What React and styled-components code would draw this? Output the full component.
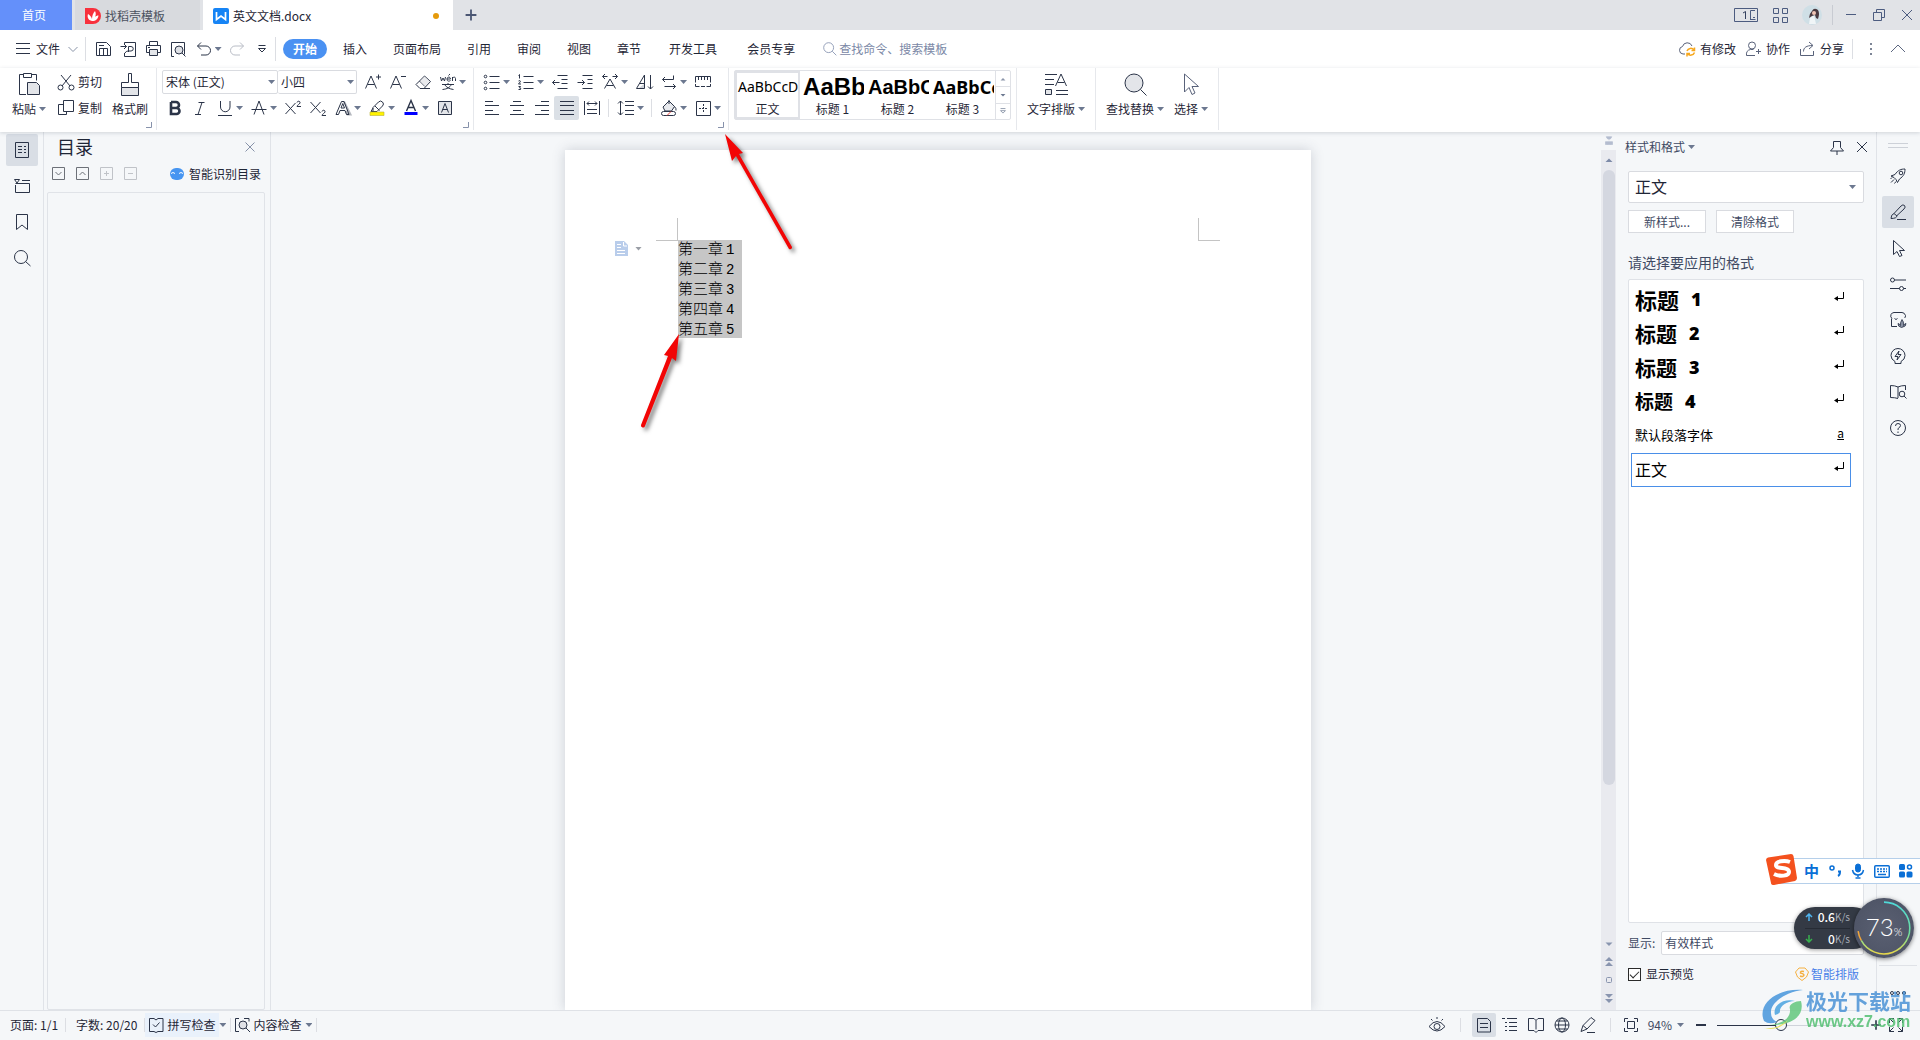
import React, { useState } from "react";
import styled, { createGlobalStyle, css } from "styled-components";

const INK = "#2b3448";

const GlobalStyle = createGlobalStyle`
  * {
    box-sizing: border-box;
  }
  html,
  body,
  #root {
    height: 100%;
    margin: 0;
  }
  body {
    overflow: hidden;
    background: #f5f7f9;
    color: #1f2636;
    font-family: "Noto Sans CJK SC", "Noto Sans", sans-serif;
    font-size: 12px;
    line-height: 18px;
  }
  button,
  input,
  select {
    margin: 0;
    padding: 0;
    border: 0;
    background: none;
    color: inherit;
    font: inherit;
  }
`;

/* every icon is drawn on a 20 x 20 grid */
const icons = {
  menu: <path d="M3 4.500h14M3 9.500h14M3 14.500h14" />,
  chevronDown: <path d="M5.500 8l4.500 4.500L14.500 8" />,
  chevronUp: <path d="M3 13l7-7 7 7" />,
  save: (
    <path d="M3.500 16.500v-13h10l4 4v9zM6.500 16.500v-7h8v7M10.500 9.500v7M6 6.500h5" />
  ),
  exportPdf: (
    <path d="M6.500 5V3.500h11v14h-11V14M2.500 7.500h6M6 5l2.500 2.500L6 10M10.500 13V7.500h2.500a2 2 0 0 1 0 4.500h-3q-2 0-3 2" />
  ),
  print: (
    <>
      <path d="M6.500 6.500v-4h8v4M6 13.500H3.500v-7h14v7H15" />
      <path d="M6.500 10.500h8v6h-8z" fill="#e3e5e9" />
      <path d="M5 8.500h2" />
    </>
  ),
  preview: (
    <>
      <path d="M6 17.500H3.500v-14h13v12" />
      <circle cx="11" cy="11" r="4" fill="#dfe1e6" />
      <path d="M14 14l3.500 3.500" />
    </>
  ),
  undo: <path d="M7 3.500L3.500 7 7 10.500M3.500 7h8.500a4.500 4.500 0 0 1 0 9H7" />,
  redo: <path d="M13 3.500L16.500 7 13 10.500M16.500 7H8a4.500 4.500 0 0 0 0 9h5" />,
  more: <path d="M6.500 6.500h7M6.500 9.500l3.500 3.500 3.500-3.500z" />,
  search: (
    <>
      <circle cx="8.500" cy="8.500" r="5.500" />
      <path d="M12.500 12.500l4.500 4.500" />
    </>
  ),
  cloud: (
    <>
      <path d="M8 15H6a3.800 3.800 0 0 1-.5-7.500 5 5 0 0 1 9.500-.5" />
      <g stroke="#f7a71c" strokeWidth="1.500">
        <path d="M10 12a4 4 0 0 1 7-1M17.500 8.500v3h-3M17.500 13.500a4 4 0 0 1-7 1M10 17.500v-3h3" />
      </g>
    </>
  ),
  collab: (
    <>
      <circle cx="9" cy="6.500" r="3.500" />
      <path d="M12 16.500H3.500c-.5-3.500 1-5.500 4-6h3M13 12.500h5M15.500 10v5" />
    </>
  ),
  share: <path d="M3.500 10v6.500h13V12M6.500 12.500c0-4 3-6 9-6M12 3l4 3.500-4 3.500" />,
  dots: (
    <path d="M9 4h2v2H9zM9 9h2v2H9zM9 14h2v2H9z" fill="currentColor" stroke="none" />
  ),
  plus: <path d="M4 10h12M10 4v12" strokeWidth="2" />,
  minus: <path d="M5 10h10" strokeWidth="2" />,
  winMin: <path d="M5 9.500h10" />,
  winRestore: <path d="M4.500 7.500h8v8h-8zM7.500 7V4.500h8v8H13" />,
  close: <path d="M5 5l10 10M15 5L5 15" />,
  grid: <path d="M3.500 3.500h5v5h-5zM12.500 3.500h5v5h-5zM3.500 12.500h5v5h-5zM12.500 12.500h5v5h-5z" />,
  cut: (
    <>
      <path d="M5 3l9 11M15 3L6 14" />
      <circle cx="4.500" cy="15.500" r="2.500" />
      <circle cx="15.500" cy="15.500" r="2.500" />
    </>
  ),
  copy: <path d="M7.500 2.500h10v11h-10zM7.500 6.500h-5v10h8v-3" />,
  fontUp: <path d="M2.500 16.500L8 4l5.500 12.500M4.500 12.500h7M13 5h5M15.500 2.500v5" />,
  fontDown: <path d="M2.500 16.500L8 4l5.500 12.500M4.500 12.500h7M13 4.500h5" />,
  eraser: (
    <>
      <path d="M11.500 4l6 5.500-6.500 7H7L3 12.500z" />
      <path d="M6.500 9l5.500 5.500" />
      <path d="M7 9.500l4.500-5 5.500 5-5 5z" fill="#dfe1e6" stroke="none" opacity="0.7" />
      <path d="M7 16.500h10" />
    </>
  ),
  pinyin: (
    <>
      <path d="M2.500 5l1 4 1.500-3 1.500 3 1-4M9 7h3.500c0-2.500-3.500-2.500-3.500 0s2 2.500 3.500 1.500M14.500 9V5M14.500 6.500c1-2 3-1.500 3 0V9M10.500 3.500l1.500-1.500" />
      <path d="M4 12.500h12M10 11v1.500M6.500 12.500c2 3 5 4.500 9 5M13.500 12.500c-2 3-4 4.500-9 5" />
    </>
  ),
  bold: (
    <path d="M6 4v12h5.500a3 3 0 0 0 0-6H6M6 4h5a2.800 2.800 0 0 1 0 6" strokeWidth="2.600" />
  ),
  italic: <path d="M8.500 4.500h6M5 16.500h6M12 4.500l-4 12" />,
  underline: <path d="M5.500 3v6a4.500 4.500 0 0 0 9.500 0V3M3 17.500h14" />,
  strike: <path d="M5 16.500L10 3l5 13.500M2.500 11.500h15" />,
  sup: <path d="M2.500 5l10 11M12.500 5l-10 11M14 4.500c.5-2 3.500-1.500 3 .5-.5 1.500-3 2-3 3.500h4" />,
  sub: <path d="M2.500 4l10 11M12.500 4l-10 11M14 13.500c.5-2 3.500-1.500 3 .5-.5 1.500-3 2-3 3.500h4" />,
  textEffect: (
    <>
      <path d="M11 3.500l6.500 13h-3l-1.500-3.500" opacity="0.35" strokeWidth="2" />
      <path d="M3 16.500L8.500 3.500h2.500l5 13h-2.500l-1.500-4H7l-1.500 4zM8 10h3.500L9.800 5.500z" />
    </>
  ),
  highlighter: (
    <>
      <path d="M6 9.500l5.500-5.500q2-2 4 0t0 4L10 13.500H6z" />
      <path d="M8 8l4.500 4.500M6 10l-2 3.500h4" />
      <path d="M3 14h14v3.500H3z" fill="#fff200" stroke="#b8b23a" strokeWidth="0.600" />
    </>
  ),
  fontColor: (
    <>
      <path d="M5.500 13L10 2.500 14.500 13M7 9.500h6" strokeWidth="1.400" />
      <path d="M3.500 14h13v3h-13z" fill="#0000ff" stroke="none" />
    </>
  ),
  charShade: (
    <>
      <path d="M3.500 3.500h13v13h-13z" fill="#e3e5e9" />
      <path d="M6.500 14.500L10 5.500l3.500 9M7.500 11.500h5" />
    </>
  ),
  bullets: (
    <>
      <path d="M7.500 4.500h10M7.500 10.500h10M7.500 16.500h10" />
      <circle cx="3.500" cy="4.500" r="1.300" />
      <circle cx="3.500" cy="10.500" r="1.300" />
      <circle cx="3.500" cy="16.500" r="1.300" />
    </>
  ),
  numbering: (
    <path d="M7.500 4.500h10M7.500 10.500h10M7.500 16.500h10M2.500 3.500l1-1v4M2.500 9q2-1 2 .5l-2 2.500H5M2.500 14.500h2l-1 1.500q2 0 1 1.500H2.500" />
  ),
  indentLess: (
    <path d="M7.500 3.500h10M11.500 7.500h6M11.500 11.500h6M7.500 16.500h10M2.500 10.500h7M5 8l-2.500 2.500L5 13" />
  ),
  indentMore: (
    <path d="M7.500 3.500h10M12.500 7.500h5M12.500 11.500h5M7.500 16.500h10M2.500 10.500h7M7 8l2.500 2.500L7 13" />
  ),
  charScale: (
    <path d="M4.500 16.500L10 7l5.500 9.500M6.500 13.500h7M2.500 4.500h5M5 2L2.500 4.500 5 7M12.500 4.500h5M15 2l2.500 2.500L15 7" />
  ),
  sort: (
    <>
      <path d="M2.500 16.500L10.500 3v13.500zM6 11.500h4.500M16.500 3v14M14 14.500l2.500 2.500 2.500-2.500" />
      <path d="M5 16l5-4v4z" fill="#cfd3da" stroke="none" />
    </>
  ),
  wrap: <path d="M14.500 3.500v4h-11M6 5L3.500 7.500 6 10M5.500 14.500h11M14 12l2.500 2.500L14 17" />,
  tabs: (
    <path d="M2.500 10.500v-6h15v6M5.500 5v3M8.500 5v3M11.500 5v3M14.500 5v3M2.500 14.500h4M13.500 14.500h4M8 14.500h4M2.500 12v2.500M17.500 12v2.500" />
  ),
  alignLeft: <path d="M3 3.500h8M3 7.500h14M3 12.500h8M3 16.500h14" />,
  alignCenter: <path d="M6 3.500h8M3 7.500h14M6 12.500h8M3 16.500h14" />,
  alignRight: <path d="M9 3.500h8M3 7.500h14M9 12.500h8M3 16.500h14" />,
  justify: <path d="M3 3.500h14M3 7.500h14M3 12.500h14M3 16.500h14" />,
  distribute: (
    <path d="M2.500 3v14M17.500 3v14M5 5.500h10M7 3.500L5 5.500l2 2M13 3.500l2 2-2 2M5 11.500h10M5 15.500h10" />
  ),
  lineSpacing: (
    <path d="M9 3.500h9M9 7.500h9M9 12.500h9M9 16.500h9M4.500 3v14M2 5.500L4.500 3 7 5.500M2 14.500L4.500 17 7 14.500" />
  ),
  fill: (
    <>
      <path d="M4 9l6-6 5.500 5.500-3 4.500H6z" fill="#e8eaee" />
      <path d="M10 6V2M15.500 8.500q2 2 1.500 4" />
      <rect x="2.500" y="13.500" width="14" height="4" rx="2" fill="#fff" />
      <path d="M8 17.500l4-4" stroke="#e8453c" />
    </>
  ),
  borders: (
    <>
      <path d="M3.500 3.500h14v14h-14z" />
      <path d="M6 10.500h9M10.500 6v9" strokeDasharray="2 1" />
    </>
  ),
  toc: (
    <path d="M3.500 2.500h13v15h-13zM6 6.500h4M6 9.500h4M6 12.500h4M12 6.500h2M12 9.500h2M12 12.500h2" />
  ),
  folder: <path d="M10 4.500h8M3.500 9v7.500h14v-9h-14M2.500 3.500h5L5 7z" />,
  bookmark: <path d="M4.500 2.500h11v15L10 13l-5.500 4.500z" />,
  find: (
    <>
      <circle cx="9" cy="9" r="6.500" />
      <path d="M13.500 13.500l5 4.500" />
    </>
  ),
  boxDown: <path d="M3.500 3.500h12v12h-12zM6.500 8l3 3 3-3" />,
  boxUp: <path d="M3.500 3.500h12v12h-12zM6.500 11l3-3 3 3" />,
  boxPlus: <path d="M3.500 3.500h12v12h-12zM7 9.500h5M9.500 7v5" />,
  boxMinus: <path d="M3.500 3.500h12v12h-12zM7 9.500h5" />,
  pin: <path d="M6.500 4.500h7v6l3 3.500h-13l3-3.500zM10 14v4" />,
  rocket: (
    <>
      <path d="M7 8.500C10 4 13 3 17 3c0 4-1 7-5.500 10l-2 3.500-1.500-3L6 11.500 3 10z" />
      <circle cx="13" cy="7" r="1.800" />
      <path d="M6 13.500l-3 3M4 11.500l-1.500 1.500M8 15.500L6.500 17.500" />
    </>
  ),
  brushPen: (
    <path d="M3 16.500q0-4 3-5l7-7.500q2-2 3.500-.500t-.500 3.500L9 13.500q0 3-6 3zM6 11.500l3 2.500M9 17.500h9" />
  ),
  pointer: <path d="M5.500 2.500v14l3.500-3 2.500 5 2.500-1-2.500-5h5z" />,
  sliders: (
    <>
      <circle cx="4.500" cy="6" r="2" />
      <circle cx="13.500" cy="14.500" r="2" />
      <path d="M6.500 6H18M2 14.500h9.500M15.500 14.500H18" />
    </>
  ),
  assets: (
    <>
      <path d="M4 8.500Q2 7 3 4.500 4 2.500 6 2.500h8q2.500 0 3.500 3 0 2-1 2.500M3.500 8.500v8H9M6.500 8.500q1.500 2 3 0" />
      <path
        d="M13.500 17.500q-4-1-3.500-4 1.500 0 2.500 2-.5-3 1.500-6 2 2 1.500 6 1-2 2.500-2 .500 3-4.500 4z"
        fill="#8b93a5"
        strokeWidth="0.800"
      />
    </>
  ),
  bulb: (
    <path d="M7 15.500Q3 13.500 3 9.500a7 7 0 0 1 14 0q0 4-4 6v2H7zM11 5l-4 5.500h3L9 14l4-5.500h-3z" />
  ),
  book: (
    <path d="M10 5v11M10 5q-3-1.500-7.500-1.500v12q4.500 0 7.500 1M10 5q3-1.500 7.500-1.500V8" />
  ),
  bookOpen: <path d="M2.500 3.500h5.500l2 2 2-2h5.500v12h-5.500l-2 2-2-2H2.500zM10 5.500v9" />,
  lens: (
    <>
      <circle cx="14" cy="12" r="2.800" />
      <path d="M16 14l2.500 2.500" />
    </>
  ),
  help: (
    <>
      <circle cx="10" cy="10" r="7.500" />
      <path d="M7.500 8q0-2.500 2.500-2.500t2.500 2q0 1.500-2 2.500-.5.500-.5 2M10 13.500v1.500" />
    </>
  ),
  spell: (
    <path d="M8 3.500H3.500v13h4.500l2 1 2-1h5v-13h-5l-2 1.500zM7 9.500l2.500 2.500 4-4.500" />
  ),
  inspect: (
    <>
      <path d="M7 3.500H3.500v13H7M12 3.500h5v3" />
      <circle cx="11" cy="10" r="4" fill="#dfe1e6" />
      <path d="M14 13l4 4" />
    </>
  ),
  eye: (
    <>
      <path d="M2 11.500q8-10 16 0-8 9-16 0zM10 2v2M4 4l1.500 1.500M16 4l-1.500 1.500" />
      <circle cx="10" cy="11.500" r="3" />
    </>
  ),
  pageView: <path d="M3.500 3.500h10l3 3v10.500h-13zM6 8.500h8M6 12.500h8" />,
  outline: (
    <path d="M2 3.500h3M7 3.500h10M5 7.500h2M9 7.500h8M5 11.500h2M9 11.500h8M5 15.500h2M9 15.500h8" />
  ),
  globe: (
    <>
      <circle cx="10" cy="10" r="7" />
      <ellipse cx="10" cy="10" rx="3.500" ry="7" />
      <path d="M3 10h14M4.500 6h11M4.500 14h11" />
    </>
  ),
  pen: <path d="M3 16.500l2-6 8-8 4 3-8 8.500zM5 10.500l4 3.500M9 17.500h8" />,
  fit: (
    <path d="M3.500 7V3.500H7M13 3.500h3.500V7M16.500 13v3.500H13M7 16.500H3.500V13M6.500 6.500h7v7h-7z" />
  ),
  full: (
    <path d="M3.500 8V3.500H8M12 3.500h4.500V8M16.500 12v4.500H12M8 16.500H3.500V12M3.500 3.500l4 4M16.500 3.500l-4 4M16.500 16.500l-4-4M3.500 16.500l4-4" />
  ),
  enter: (
    <>
      <path d="M15.500 5v6.500H8" />
      <path d="M6 11.500l4-2.500v5z" fill="currentColor" stroke="none" />
    </>
  ),
  ruler: (
    <path
      d="M6 4h8l-2 3h-4zM10 7v2M5 15v-4h10v4zM8 15v-2M12 15v-2"
      fill="#b4bdd0"
    />
  ),
  doubleUp: (
    <path d="M6 9l4-4 4 4zM6 14l4-4 4 4z" fill="currentColor" stroke="none" />
  ),
  doubleDown: (
    <path d="M6 6h8l-4 4zM6 11h8l-4 4z" fill="currentColor" stroke="none" />
  ),
  triUp: <path d="M6.500 12L10 8.500l3.500 3.500z" fill="currentColor" stroke="none" />,
  triDown: <path d="M6.500 8.500h7L10 12z" fill="currentColor" stroke="none" />,
  locate: <rect x="7.500" y="7.500" width="5" height="5" rx="1" />,
};

const Icon = ({ name, size = 20, color }) => (
  <Svg
    width={size}
    height={size}
    viewBox="0 0 20 20"
    fill="none"
    stroke="currentColor"
    $color={color}
    aria-hidden="true"
  >
    {icons[name]}
  </Svg>
);

const ToolButton = ({ icon, label, caret, active, color }) => (
  <Tool type="button" title={label} $caret={caret} $active={active}>
    <Icon name={icon} color={color} />
    {caret && <Caret />}
  </Tool>
);

const SelectBox = ({ label, options, ...box }) => (
  <SelectWrap {...box}>
    <select aria-label={label}>
      {options.map((o) => (
        <option key={o}>{o}</option>
      ))}
    </select>
    <Caret />
  </SelectWrap>
);

const TitleBar = () => (
  <TitleRow>
    <HomeTab type="button">首页</HomeTab>
    <DocTab type="button">
      <svg width="16" height="16" viewBox="0 0 16 16">
        <path d="M0 0h8a8 8 0 0 1 0 16H0z" fill="#f8313d" />
        <path
          d="M7 13C3 12 2 9 3 6c2 1 3.500 3 4 5 0-3 1-6 3-8 1 2 1 4 0 6 1-1 2-1.500 3.500-1.500C13 11 11 13 7 13z"
          fill="#fff"
        />
      </svg>
      找稻壳模板
    </DocTab>
    <DocTab type="button" $current>
      <svg width="16" height="16" viewBox="0 0 16 16">
        <rect width="16" height="16" rx="2" fill="#1684f5" />
        <path d="M3.500 4v7.500L8 8l4.500 3.500V4" fill="none" stroke="#fff" strokeWidth="1.700" />
      </svg>
      英文文档.docx
      <Unsaved />
    </DocTab>
    <NewTab type="button" aria-label="新建">
      <Icon name="plus" size={18} color="#4a5673" />
    </NewTab>
    <WindowTools>
      <AccountTools>
        <svg width="24" height="14" viewBox="0 0 24 14" fill="none" stroke="#4c5c80">
          <path d="M.5.500h23v13H.5zM21 2.500h-4.500v9.500M16.500 11.500h5M19 9.500h2" />
          <path d="M9 5l2.500-1.500V11" stroke="#33405e" />
        </svg>
        <Icon name="grid" color="#4c5c80" />
        <svg width="20" height="20" viewBox="0 0 20 20">
          <circle cx="10" cy="10" r="10" fill="#cfdfe6" />
          <path d="M7 19l1-6 4-3 2 9z" fill="#f0f5f7" />
          <path d="M10 6q2-4 6-1 2 3 0 9l-2-1-1-3-3 1-3 2q0-4 3-7z" fill="#4a3a40" />
          <circle cx="12" cy="8" r="2" fill="#f0c4b4" />
        </svg>
      </AccountTools>
      <TitleDivider />
      <Icon name="winMin" color="#4c5c80" />
      <Icon name="winRestore" color="#4c5c80" />
      <Icon name="close" color="#4c5c80" />
    </WindowTools>
  </TitleRow>
);

const menus = ["插入", "页面布局", "引用", "审阅", "视图", "章节", "开发工具", "会员专享"];

const MenuBar = () => (
  <MenuRow>
    <FileButton type="button">
      <Icon name="menu" />
      文件
      <Icon name="chevronDown" color="#8a94a8" />
    </FileButton>
    <Divider $h={24} />
    <QuickTools>
      <ToolButton icon="save" label="保存" />
      <ToolButton icon="exportPdf" label="输出为PDF" />
      <ToolButton icon="print" label="打印" />
      <ToolButton icon="preview" label="打印预览" />
      <ToolButton icon="undo" label="撤消" caret />
      <ToolButton icon="redo" label="恢复" color="#b9bdc6" />
      <ToolButton icon="more" label="自定义快速访问工具栏" />
    </QuickTools>
    <Divider $h={24} />
    <MenuTab type="button" $current>
      开始
    </MenuTab>
    {menus.map((m, i) => (
      <MenuTab key={m} type="button" $wide={i > 5}>
        {m}
      </MenuTab>
    ))}
    <CommandSearch>
      <Icon name="search" size={18} color="#8b97b3" />
      <input aria-label="查找命令" placeholder="查找命令、搜索模板" />
    </CommandSearch>
    <MenuRight>
      <button type="button">
        <Icon name="cloud" color="#59627a" />
        有修改
      </button>
      <button type="button">
        <Icon name="collab" color="#59627a" />
        协作
      </button>
      <button type="button">
        <Icon name="share" color="#59627a" />
        分享
      </button>
      <Divider $h={20} $gap={1} />
      <Icon name="dots" color="#7d8596" />
      <Icon name="chevronUp" color="#5c6780" />
    </MenuRight>
  </MenuRow>
);

const samples = [
  { name: "正文", text: "AaBbCcD", size: 14 },
  { name: "标题 1", text: "AaBb", size: 24, bold: true },
  { name: "标题 2", text: "AaBbC", size: 20, bold: true },
  { name: "标题 3", text: "AaBbCc", size: 18, bold: true },
];

const Launcher = () => (
  <Launch type="button" aria-label="更多选项">
    <svg width="6" height="6" viewBox="0 0 6 6" fill="none" stroke="#8792ab">
      <path d="M5.500 0v5.500H0" />
    </svg>
  </Launch>
);

const Ribbon = () => (
  <RibbonRow>
    <Group $pad="0 4px 0 12px">
      <GroupBody $gap={10} $end={4}>
        <BigButton type="button">
          <svg width="24" height="26" viewBox="0 0 24 26" fill="none" stroke={INK}>
            <path d="M9 23.500H2.500v-20h4M15 3.500h4.500v6M6.500 2.500h8v4h-8z" />
            <path d="M10.500 11.500h9l3 3v9h-12z" fill="#e3e5e9" />
          </svg>
          <span>
            粘贴
            <Caret />
          </span>
        </BigButton>
        <Stack>
          <SmallButton type="button">
            <Icon name="cut" />
            剪切
          </SmallButton>
          <SmallButton type="button">
            <Icon name="copy" />
            复制
          </SmallButton>
        </Stack>
        <BigButton type="button">
          <svg width="24" height="26" viewBox="0 0 24 26" fill="none" stroke={INK}>
            <path d="M10.500 2.500h3v9h7v5h-17v-5h7z" />
            <path d="M3.500 16.500h17v8h-17z" fill="#e3e5e9" />
          </svg>
          <span>格式刷</span>
        </BigButton>
      </GroupBody>
      <Launcher />
    </Group>
    <Group>
      <Stack>
        <ToolRow>
          <SelectBox label="字体" options={["宋体 (正文)"]} $w={116} $h={24} />
          <SelectBox label="字号" options={["小四"]} $w={79} $h={24} $joined />
          <Spacer $w={3} />
          <ToolButton icon="fontUp" label="增大字号" />
          <ToolButton icon="fontDown" label="减小字号" />
          <ToolButton icon="eraser" label="清除格式" />
          <ToolButton icon="pinyin" label="拼音指南" caret />
        </ToolRow>
        <ToolRow>
          <ToolButton icon="bold" label="加粗" />
          <ToolButton icon="italic" label="倾斜" />
          <ToolButton icon="underline" label="下划线" caret />
          <ToolButton icon="strike" label="删除线" caret />
          <ToolButton icon="sup" label="上标" />
          <ToolButton icon="sub" label="下标" />
          <ToolButton icon="textEffect" label="文字效果" caret />
          <ToolButton icon="highlighter" label="突出显示" caret />
          <ToolButton icon="fontColor" label="字体颜色" caret />
          <ToolButton icon="charShade" label="字符底纹" />
        </ToolRow>
      </Stack>
      <Launcher />
    </Group>
    <Group>
      <Stack>
        <ToolRow>
          <ToolButton icon="bullets" label="项目符号" caret />
          <ToolButton icon="numbering" label="编号" caret />
          <ToolButton icon="indentLess" label="减少缩进量" />
          <ToolButton icon="indentMore" label="增加缩进量" />
          <ToolButton icon="charScale" label="中文版式" caret />
          <ToolButton icon="sort" label="排序" />
          <ToolButton icon="wrap" label="显示编辑标记" caret />
          <ToolButton icon="tabs" label="制表位" />
        </ToolRow>
        <ToolRow>
          <ToolButton icon="alignLeft" label="左对齐" />
          <ToolButton icon="alignCenter" label="居中对齐" />
          <ToolButton icon="alignRight" label="右对齐" />
          <ToolButton icon="justify" label="两端对齐" active />
          <ToolButton icon="distribute" label="分散对齐" />
          <Divider $h={18} $gap={4} />
          <ToolButton icon="lineSpacing" label="行距" caret />
          <Divider $h={18} $gap={4} />
          <ToolButton icon="fill" label="底纹颜色" caret />
          <ToolButton icon="borders" label="边框" caret />
        </ToolRow>
      </Stack>
      <Launcher />
    </Group>
    <Group $pad="0 5px">
      <Gallery>
        {samples.map((s, i) => (
          <StyleCard key={s.name} type="button" $current={i === 0}>
            <Sample $size={s.size} $bold={s.bold}>
              {s.text}
            </Sample>
            {s.name}
          </StyleCard>
        ))}
        <GalleryScroll>
          <button type="button" aria-label="上一行">
            <Icon name="triUp" size={14} color="#8b95aa" />
          </button>
          <button type="button" aria-label="下一行">
            <Icon name="triDown" size={14} color="#6c7890" />
          </button>
          <button type="button" aria-label="展开">
            <Icon name="more" size={14} color="#6c7890" />
          </button>
        </GalleryScroll>
      </Gallery>
    </Group>
    <Group $pad="0 10px">
      <GroupBody>
        <BigButton type="button">
          <svg width="24" height="24" viewBox="0 0 24 24" fill="none" stroke={INK}>
            <path d="M1 2.500h12M1 7.500h9M1 12.500h9M11.500 14L17 2l5.500 12M13.500 10.500h7M12 18.500h12M12 22.500h12" />
            <path d="M1.500 17.500h6v5h-6z" fill="#e3e5e9" />
          </svg>
          <span>
            文字排版
            <Caret />
          </span>
        </BigButton>
      </GroupBody>
    </Group>
    <Group $pad="0 10px">
      <GroupBody $gap={10}>
        <BigButton type="button">
          <svg width="24" height="24" viewBox="0 0 24 24" fill="none" stroke={INK}>
            <circle cx="11" cy="11" r="9" fill="#e3e5e9" />
            <path d="M17.500 17.500l6 6" />
          </svg>
          <span>
            查找替换
            <Caret />
          </span>
        </BigButton>
        <BigButton type="button">
          <svg width="24" height="24" viewBox="0 0 24 24" fill="none" stroke="#59627a">
            <path d="M5.500 2v18l4.500-4.500 3 7 3-1.500-3-6.500h6.500z" />
          </svg>
          <span>
            选择
            <Caret />
          </span>
        </BigButton>
      </GroupBody>
    </Group>
  </RibbonRow>
);

const TocPanel = () => (
  <>
    <Rail>
      {["toc", "folder", "bookmark", "find"].map((n, i) => (
        <RailButton key={n} type="button" $active={i === 0} aria-label={n}>
          <Icon name={n} />
        </RailButton>
      ))}
    </Rail>
    <Toc>
      <TocHead>
        <h2>目录</h2>
        <button type="button" aria-label="关闭">
          <Icon name="close" size={18} color="#7a869f" />
        </button>
      </TocHead>
      <TocTools>
        <Icon name="boxDown" color="#6d7178" />
        <Icon name="boxUp" color="#6d7178" />
        <Icon name="boxPlus" color="#c0c3c8" />
        <Icon name="boxMinus" color="#c0c3c8" />
        <SmartToc type="button">
          <svg width="14" height="12" viewBox="0 0 14 12">
            <rect width="14" height="12" rx="6" fill="#4795f1" />
            <path d="M1 5.500l2-1 2 1M9 5.500l2-1 2 1" stroke="#fff" fill="none" />
          </svg>
          智能识别目录
        </SmartToc>
      </TocTools>
      <TocBody />
    </Toc>
  </>
);

const chapters = ["第一章", "第二章", "第三章", "第四章", "第五章"];

const Document = () => (
  <Canvas>
    <Page>
      <PasteTag>
        <svg width="13" height="15" viewBox="0 0 13 15">
          <path d="M0 0h9l4 4v11H0z" fill="#b9cdeb" />
          <path d="M2 3.500h4M2 6.500h4M2 9.500h8M2 12.500h8M8.500 1v4H12" stroke="#fff" fill="none" />
        </svg>
        <Caret $color="#9a9ea6" />
      </PasteTag>
      <Corner $side="left" />
      <Corner $side="right" />
      <Selection>
        {chapters.map((c, i) => (
          <Line key={c}>
            {c}
            <span>{i + 1}</span>
          </Line>
        ))}
      </Selection>
      <Arrows viewBox="0 0 300 300" width="300" height="300" fill="#f20505">
        <path d="M160-16l18 19-4 1 53 93a2 2 0 0 1-3 2L171 6l-4 5z" />
        <path d="M114 184l-3 27-4-3-27 68a2 2 0 0 1-4-1l27-69-4-1z" />
      </Arrows>
    </Page>
  </Canvas>
);

const ScrollBar = () => (
  <ScrollCol>
    <RulerToggle type="button" aria-label="标尺">
      <Icon name="ruler" size={14} color="#b4bdd0" />
    </RulerToggle>
    <Icon name="triUp" color="#7d8aa8" />
    <Thumb />
    <ScrollEnd>
      <Icon name="triDown" color="#8995af" />
      <Icon name="doubleUp" color="#8995af" />
      <Icon name="locate" color="#8995af" />
      <Icon name="doubleDown" color="#8995af" />
    </ScrollEnd>
  </ScrollCol>
);

const styleList = [
  { name: "标题", num: 1, size: 22 },
  { name: "标题", num: 2, size: 21 },
  { name: "标题", num: 3, size: 21 },
  { name: "标题", num: 4, size: 19 },
  { name: "默认段落字体", size: 13, char: true },
  { name: "正文", size: 16 },
];

const StylePanel = () => {
  const [current, setCurrent] = useState(5);
  const [preview, setPreview] = useState(true);

  return (
    <Panel>
      <PanelHead>
        <button type="button">
          样式和格式
          <Caret />
        </button>
        <Icon name="pin" />
        <Icon name="close" />
      </PanelHead>
      <SelectBox label="当前样式" options={["正文"]} $h={32} $big />
      <PanelButtons>
        <button type="button">新样式...</button>
        <button type="button">清除格式</button>
      </PanelButtons>
      <PanelTitle>请选择要应用的格式</PanelTitle>
      <StyleList>
        {styleList.map((s, i) => (
          <StyleItem
            key={i}
            type="button"
            $size={s.size}
            $bold={!!s.num}
            $current={i === current}
            onClick={() => setCurrent(i)}
          >
            {s.name}
            {s.num && <b>{s.num}</b>}
            {s.char ? <CharMark>a</CharMark> : <Icon name="enter" />}
          </StyleItem>
        ))}
      </StyleList>
      <ShowRow>
        显示:
        <SelectBox label="显示" options={["有效样式"]} $h={24} />
      </ShowRow>
      <PreviewRow>
        <label>
          <input
            type="checkbox"
            checked={preview}
            onChange={(e) => setPreview(e.target.checked)}
          />
          显示预览
        </label>
        <a href="#layout">
          <svg width="14" height="14" viewBox="0 0 14 14" fill="none" stroke="#f5b041">
            <path d="M4 1h6l3.500 4-2 5L7 13.500 2.500 10l-2-5z" />
            <path d="M9 4.500Q5 3.500 5.500 6q3 .5 3.500 2-1 2.500-4 1" strokeWidth="1.500" />
          </svg>
          智能排版
        </a>
      </PreviewRow>
    </Panel>
  );
};

const sideIcons = ["rocket", "brushPen", "pointer", "sliders", "assets", "bulb", "book", "help"];

const SideRail = () => (
  <Rail $right>
    <Grip />
    {sideIcons.map((n) => (
      <RailButton key={n} type="button" $active={n === "brushPen"} aria-label={n}>
        {n === "book" ? (
          <Svg width="20" height="20" viewBox="0 0 20 20" fill="none" stroke="currentColor">
            {icons.book}
            {icons.lens}
          </Svg>
        ) : (
          <Icon name={n} />
        )}
      </RailButton>
    ))}
    <RailFoot>
      <svg width="16" height="4" viewBox="0 0 16 4" fill="none" stroke={INK}>
        <circle cx="2" cy="2" r="1.500" />
        <circle cx="8" cy="2" r="1.500" />
        <circle cx="14" cy="2" r="1.500" />
      </svg>
    </RailFoot>
  </Rail>
);

const StatusBar = () => {
  const [zoom, setZoom] = useState(43);

  return (
    <Status>
      <StatusText>页面: 1/1</StatusText>
      <Divider $h={14} />
      <StatusText>字数: 20/20</StatusText>
      <Divider $h={14} />
      <StatusButton type="button" $on>
        <Icon name="spell" />
        拼写检查
      </StatusButton>
      <Caret />
      <Spacer $w={4} />
      <Divider $h={14} />
      <StatusButton type="button">
        <Icon name="inspect" />
        内容检查
      </StatusButton>
      <Caret />
      <Spacer $w={4} />
      <Divider $h={14} />
      <ViewTools>
        <RailButton type="button" $small aria-label="护眼模式">
          <Icon name="eye" />
        </RailButton>
        <Divider $h={14} $gap={9} />
        {["pageView", "outline", "bookOpen", "globe", "pen"].map((n, i) => (
          <RailButton key={n} type="button" $small $active={i === 0} aria-label={n}>
            <Icon name={n} />
          </RailButton>
        ))}
        <Divider $h={14} $gap={8} />
        <Icon name="fit" />
        <ZoomText type="button">
          94%
          <Caret />
        </ZoomText>
        <Icon name="minus" />
        <ZoomSlider
          type="range"
          aria-label="缩放"
          min="0"
          max="100"
          value={zoom}
          onChange={(e) => setZoom(e.target.value)}
        />
        <Icon name="plus" size={16} />
        <Icon name="full" />
      </ViewTools>
    </Status>
  );
};

const ImeBar = () => (
  <Ime>
    <svg width="34" height="32" viewBox="0 0 34 32">
      <path d="M1 6q0-2 2-2.500L26 0q2 0 2.500 2L32 24q0 2-2 3L9 31q-3 0-3-2z" fill="#f4511e" />
      <path
        d="M25 8c-5-2-14-1-14 3 0 5 13 1 13 7 0 4-9 5-15 2"
        fill="none"
        stroke="#fff"
        strokeWidth="4"
      />
    </svg>
    <b>中</b>
    <svg width="14" height="14" viewBox="0 0 14 14" fill="none" stroke="#0a6fd6">
      <circle cx="4" cy="4" r="2" strokeWidth="1.500" />
      <path d="M10 7.500h2q0 3.500-2 4.500" strokeWidth="2" />
    </svg>
    <svg width="14" height="16" viewBox="0 0 14 16" fill="none" stroke="#0a6fd6">
      <rect x="4.500" y="1" width="5" height="8" rx="2.500" fill="#0a6fd6" />
      <path d="M1.500 7q1 5 5.500 5t5.500-5M7 12v2M4.500 15h5" strokeWidth="1.500" />
    </svg>
    <svg width="16" height="13" viewBox="0 0 16 13" fill="none" stroke="#0a6fd6">
      <rect x=".75" y=".75" width="14.500" height="11.500" rx="1" strokeWidth="1.500" />
      <path d="M3 4h10M3 6.500h10" strokeWidth="1.500" strokeDasharray="2 1" />
      <path d="M4 9.500h8" strokeWidth="1.500" />
    </svg>
    <svg width="14" height="14" viewBox="0 0 14 14" fill="#0a6fd6">
      <rect width="6" height="6" rx="1.500" />
      <rect y="7.500" width="6" height="6" rx="1.500" />
      <rect x="7.500" y="7.500" width="6" height="6" rx="1.500" />
      <rect x="8.500" y="1" width="4" height="4" rx="2" fill="none" stroke="#0a6fd6" strokeWidth="1.500" />
    </svg>
  </Ime>
);

const SpeedBall = () => (
  <Speed>
    <SpeedPill>
      <SpeedLine>
        <svg width="8" height="8" viewBox="0 0 8 8" fill="none" stroke="#4fb4f0" strokeWidth="1.500">
          <path d="M4 8V1M1 4l3-3 3 3" />
        </svg>
        0.6<small>K/s</small>
      </SpeedLine>
      <SpeedLine>
        <svg width="8" height="8" viewBox="0 0 8 8" fill="none" stroke="#37b24d" strokeWidth="1.500">
          <path d="M4 0v7M1 4l3 3 3-3" />
        </svg>
        0<small>K/s</small>
      </SpeedLine>
    </SpeedPill>
    <Ball>
      <svg width="60" height="60" viewBox="0 0 58 58" fill="none" strokeWidth="1.500">
        <defs>
          <linearGradient id="ring" x1="0" y1="0" x2="0" y2="1">
            <stop offset="0" stopColor="#4fd8d8" />
            <stop offset="0.600" stopColor="#6fe0a0" />
            <stop offset="1" stopColor="#e8d84a" />
          </linearGradient>
        </defs>
        <path d="M29 4a25 25 0 1 1-22 37" stroke="url(#ring)" />
        <path d="M7 41a25 25 0 0 1-3-9" stroke="#f0a63c" />
      </svg>
      <p>
        73<small>%</small>
      </p>
    </Ball>
  </Speed>
);

const Watermark = () => (
  <Mark>
    <svg width="42" height="42" viewBox="0 0 42 42">
      <path d="M3 32C-4 16 14-1 42 1 24 3 9 14 10 24q0 6 6 9-8 3-13-1z" fill="#4796dc" />
      <path d="M14 26c-3-10 9-17 20-14-9 0-16 6-15 11q-2 3-5 3z" fill="#4aa3e0" />
      <path d="M40 12c4 14-8 25-32 24 12-1 22-6 21-16-2-4 4-8 11-8z" fill="#63c77d" />
      <path d="M3 39c10 1 17-2 24-8-5 7-14 11-24 8z" fill="#e8de4a" />
    </svg>
    <div>
      <strong>极光下载站</strong>
      <em>www.xz7.com</em>
    </div>
  </Mark>
);

const App = () => (
  <Shell>
    <GlobalStyle />
    <TitleBar />
    <MenuBar />
    <Ribbon />
    <Workspace>
      <TocPanel />
      <Document />
      <ScrollBar />
      <StylePanel />
      <SideRail />
    </Workspace>
    <StatusBar />
    <ImeBar />
    <SpeedBall />
    <Watermark />
  </Shell>
);

const Svg = styled.svg`
  flex: none;
  color: ${(p) => p.$color || INK};
`;

const Shell = styled.div`
  position: relative;
  display: flex;
  flex-direction: column;
  height: 100vh;
`;

const Caret = styled.i`
  flex: none;
  width: 7px;
  height: 4px;
  background: ${(p) => p.$color || "#6c7890"};
  clip-path: polygon(0 0, 100% 0, 50% 100%);
`;

const Divider = styled.span`
  flex: none;
  width: 1px;
  height: ${(p) => p.$h}px;
  margin: 0 ${(p) => p.$gap || 0}px;
  background: #dcdee3;
`;

const Spacer = styled.span`
  width: ${(p) => p.$w}px;
`;

/* title bar */
const TitleRow = styled.header`
  display: flex;
  flex: none;
  gap: 3px;
  height: 30px;
  background: #e1e3e7;
`;

const HomeTab = styled.button`
  width: 72px;
  padding-right: 4px;
  background: #6490fa;
  color: #fff;
`;

const DocTab = styled.button`
  display: flex;
  align-items: center;
  gap: 4px;
  width: ${(p) => (p.$current ? 250 : 125)}px;
  padding: 2px 14px 0 10px;
  background: ${(p) => (p.$current ? "#fff" : "#d8dade")};
  color: ${(p) => (p.$current ? "#1f2636" : "#4c5260")};
`;

const Unsaved = styled.i`
  width: 6px;
  height: 6px;
  margin-left: auto;
  border-radius: 50%;
  background: #e59a0b;
`;

const NewTab = styled.button`
  display: flex;
  align-items: center;
  padding: 0 6px;
`;

const WindowTools = styled.div`
  display: flex;
  align-items: center;
  gap: 8px;
  margin-left: auto;
  padding-right: 3px;
`;

const AccountTools = styled.div`
  display: flex;
  align-items: center;
  gap: 12px;
  padding-right: 2px;
`;

const TitleDivider = styled.span`
  width: 1px;
  height: 20px;
  background: #c8cbd2;
`;

/* menu bar */
const MenuRow = styled.nav`
  display: flex;
  flex: none;
  align-items: center;
  height: 38px;
  background: #fff;
`;

const FileButton = styled.button`
  display: flex;
  align-items: center;
  gap: 3px;
  width: 85px;
  padding-left: 13px;
`;

const QuickTools = styled.div`
  display: flex;
  align-items: center;
  justify-content: space-between;
  width: 189px;
  padding-left: 4px;
`;

const MenuTab = styled.button`
  height: 20px;
  padding: 0 ${(p) => (p.$wide ? 15 : 13)}px;
  ${(p) =>
    p.$current &&
    css`
      margin: 0 3px 0 7px;
      padding: 0 10px;
      border-radius: 10px;
      background: #4a91f2;
      color: #fff;
      font-weight: 700;
    `}
`;

const CommandSearch = styled.label`
  display: flex;
  align-items: center;
  padding-left: 11px;
  input {
    width: 130px;
    outline: 0;
  }
  input::placeholder {
    color: #7b88a6;
  }
`;

const MenuRight = styled.div`
  display: flex;
  align-items: center;
  gap: 7px;
  margin-left: auto;
  padding-right: 12px;
  button {
    display: flex;
    align-items: center;
    gap: 3px;
  }
`;

/* ribbon */
const RibbonRow = styled.div`
  z-index: 1;
  display: flex;
  flex: none;
  height: 64px;
  padding-bottom: 2px;
  background: #fff;
  box-shadow: 0 1px 4px rgba(60, 70, 90, 0.2);
`;

const Group = styled.section`
  display: flex;
  flex-direction: column;
  padding: ${(p) => p.$pad || "0 4px 0 5px"};
  padding-top: 2px;
  border-right: 1px solid #e6e8ec;
`;

const GroupBody = styled.div`
  display: flex;
  gap: ${(p) => p.$gap || 0}px;
  padding-right: ${(p) => p.$end || 0}px;
`;

const Stack = styled.div`
  display: flex;
  flex-direction: column;
  gap: 2px;
`;

const ToolRow = styled.div`
  display: flex;
  align-items: center;
  height: 24px;
`;

const Tool = styled.button`
  display: flex;
  align-items: center;
  justify-content: center;
  width: 25px;
  height: 24px;
  border-radius: 2px;
  background: ${(p) => (p.$active ? "#dbe0e6" : "none")};
  ${(p) =>
    p.$caret &&
    css`
      justify-content: flex-start;
      gap: 1px;
      width: 34px;
      padding-left: 3px;
    `}
`;

const BigButton = styled.button`
  display: flex;
  flex-direction: column;
  align-items: center;
  height: 50px;
  > svg {
    flex: none;
    margin: 1px 0;
    height: 26px;
  }
  > span {
    display: flex;
    align-items: center;
    gap: 3px;
    height: 22px;
  }
`;

const SmallButton = styled.button`
  display: flex;
  align-items: center;
  gap: 2px;
  height: 24px;
`;

const Launch = styled.button`
  display: flex;
  align-self: flex-end;
  margin-top: 2px;
`;

const SelectWrap = styled.div`
  position: relative;
  flex: ${(p) => (p.$w ? "none" : 1)};
  width: ${(p) => (p.$w ? `${p.$w}px` : "auto")};
  select {
    display: block;
    width: 100%;
    height: ${(p) => p.$h}px;
    padding: 0 20px ${(p) => (p.$big ? "2px 6px" : "0 3px")};
    border: 1px solid #d9dbe0;
    border-left-width: ${(p) => (p.$joined ? 0 : 1)}px;
    border-radius: 2px;
    background: #fff;
    font-size: ${(p) => (p.$big ? 16 : 12)}px;
    appearance: none;
  }
  i {
    position: absolute;
    top: 50%;
    right: ${(p) => (p.$big ? 8 : 3)}px;
    margin-top: -2px;
    pointer-events: none;
  }
`;

const Gallery = styled.div`
  display: flex;
  width: 277px;
  height: 50px;
  border: 1px solid #dfe1e6;
  border-radius: 2px;
`;

const StyleCard = styled.button`
  display: flex;
  flex: 1;
  flex-direction: column;
  align-items: center;
  min-width: 0;
  padding: 0 1px;
  line-height: 16px;
  box-shadow: ${(p) => (p.$current ? "inset 0 0 0 2px #dfe1e6" : "none")};
`;

const Sample = styled.span`
  width: 100%;
  height: 30px;
  padding-left: 2px;
  overflow: hidden;
  color: #000;
  font-family: ${(p) => (p.$size > 18 ? '"Liberation Sans"' : '"Noto Sans"')}, sans-serif;
  font-size: ${(p) => p.$size}px;
  font-weight: ${(p) => (p.$bold ? 700 : 400)};
  line-height: 32px;
  text-align: left;
  white-space: nowrap;
`;

const GalleryScroll = styled.div`
  display: grid;
  width: 15px;
  border-left: 1px solid #dfe1e6;
  button {
    display: flex;
    align-items: center;
  }
  button + button {
    border-top: 1px solid #dfe1e6;
  }
`;

/* workspace */
const Workspace = styled.main`
  display: flex;
  flex: 1;
  min-height: 0;
  border-bottom: 1px solid #dfe2e7;
`;

const Rail = styled.aside`
  display: flex;
  flex: none;
  flex-direction: column;
  align-items: center;
  gap: 4px;
  width: 44px;
  padding: 2px ${(p) => (p.$right ? 2 : 0)}px 0 0;
  border: 0 solid #e0e3e8;
  border-width: ${(p) => (p.$right ? "0 0 0 1px" : "0 1px 0 0")};
`;

const RailButton = styled.button`
  display: flex;
  align-items: center;
  justify-content: center;
  width: ${(p) => (p.$small ? 24 : 32)}px;
  height: ${(p) => (p.$small ? 24 : 32)}px;
  border-radius: 2px;
  background: ${(p) => (p.$active ? "#d9dee5" : "none")};
`;

const Grip = styled.span`
  width: 20px;
  height: 5px;
  margin: 9px 0 8px;
  border: solid #cdd1d8;
  border-width: 1px 0;
`;

const RailFoot = styled.div`
  width: 38px;
  margin: auto 0 15px;
  padding-top: 22px;
  border-top: 1px solid #dfe2e7;
  line-height: 4px;
  text-align: center;
`;

const Toc = styled.section`
  display: flex;
  flex: none;
  flex-direction: column;
  width: 227px;
  padding: 0 5px 0 3px;
  border-right: 1px solid #e0e3e8;
`;

const TocHead = styled.div`
  display: flex;
  align-items: center;
  justify-content: space-between;
  height: 30px;
  padding: 0 6px 0 10px;
  h2 {
    margin: 0;
    padding-bottom: 2px;
    font-size: 18px;
    font-weight: 400;
  }
  button {
    display: flex;
  }
`;

const TocTools = styled.div`
  display: flex;
  align-items: center;
  gap: 4px;
  height: 24px;
  padding: 0 4px 0 2px;
`;

const SmartToc = styled.button`
  display: flex;
  align-items: center;
  gap: 5px;
  margin-left: auto;
`;

const TocBody = styled.div`
  flex: 1;
  margin-top: 6px;
  border: 1px solid #e0e3e8;
  border-radius: 2px;
`;

const Canvas = styled.section`
  display: flex;
  flex: 1;
  justify-content: center;
  min-width: 0;
  padding: 18px 0 0 4px;
  overflow: hidden;
`;

const Page = styled.article`
  position: relative;
  width: 746px;
  padding: 90px 113px 0;
  background: #fff;
  box-shadow: 0 0 12px rgba(60, 70, 90, 0.22);
`;

const Corner = styled.i`
  position: absolute;
  top: 68px;
  ${(p) => p.$side}: 91px;
  width: 22px;
  height: 23px;
  border: 0 solid #c4c4c4;
  border-width: ${(p) => (p.$side === "left" ? "0 1px 1px 0" : "0 0 1px 1px")};
`;

const PasteTag = styled.div`
  position: absolute;
  top: 91px;
  left: 50px;
  display: flex;
  align-items: center;
  gap: 7px;
`;

const Selection = styled.div`
  display: flex;
  flex-direction: column;
  gap: 2px;
  width: 64px;
  background: #c6c6c6;
`;

const Line = styled.p`
  display: flex;
  align-items: baseline;
  gap: 3px;
  height: 18px;
  margin: 0;
  color: #000;
  font-size: 15px;
  font-weight: 300;
  line-height: 16px;
  span {
    font-family: "Liberation Mono", monospace;
    font-size: 14px;
  }
`;

const Arrows = styled.svg`
  position: absolute;
  top: 0;
  left: 0;
  overflow: visible;
  filter: drop-shadow(3px 3px 2px rgba(0, 0, 0, 0.5));
`;

const ScrollCol = styled.div`
  display: flex;
  flex: none;
  flex-direction: column;
  align-items: center;
  width: 15px;
  background: #e9eaef;
`;

const RulerToggle = styled.button`
  display: flex;
  align-items: center;
  justify-content: center;
  width: 100%;
  height: 18px;
  background: #f5f7f9;
`;

const Thumb = styled.div`
  flex: none;
  width: 12px;
  height: 70%;
  border-radius: 6px;
  background: #d4d7e0;
`;

const ScrollEnd = styled.div`
  display: flex;
  flex-direction: column;
  margin-top: auto;
  padding-bottom: 3px;
  svg {
    margin: -1px 0;
  }
`;

/* style panel */
const Panel = styled.section`
  display: flex;
  flex: none;
  flex-direction: column;
  width: 260px;
  padding: 0 12px;
  > div {
    flex: none;
  }
`;

const PanelHead = styled.div`
  display: flex;
  align-items: center;
  gap: 5px;
  height: 30px;
  margin: 0 -8px 9px -3px;
  color: #3f4a63;
  button {
    display: flex;
    align-items: center;
    gap: 3px;
    margin-right: auto;
  }
`;

const PanelButtons = styled.div`
  display: flex;
  gap: 10px;
  margin-top: 7px;
  button {
    width: 78px;
    height: 23px;
    border: 1px solid #d9dbe0;
    background: #fff;
    color: #3f4a63;
    line-height: 16px;
  }
`;

const PanelTitle = styled.h3`
  margin: 18px 0 6px;
  color: #3f4a63;
  font-size: 14px;
  font-weight: 400;
  line-height: 22px;
`;

const StyleList = styled.div`
  && {
    flex: 1;
  }
  padding: 3px 12px 0 2px;
  border: 1px solid #dfe2e7;
  border-radius: 2px;
  background: #fff;
`;

const StyleItem = styled.button`
  display: flex;
  align-items: center;
  width: 100%;
  height: 34px;
  padding: 0 0 2px 3px;
  border: 1px solid ${(p) => (p.$current ? "#4a8fe8" : "transparent")};
  color: #000;
  font-size: ${(p) => p.$size}px;
  font-weight: ${(p) => (p.$bold ? 700 : 400)};
  b {
    margin-left: 12px;
    font-family: "Noto Sans", sans-serif;
    font-size: 18px;
  }
  svg {
    margin: 0 2px 4px auto;
    color: #000;
  }
`;

const CharMark = styled.u`
  margin: 0 6px 4px auto;
  font-size: 12px;
`;

const ShowRow = styled.div`
  display: flex;
  align-items: center;
  gap: 6px;
  margin-top: 8px;
  color: #3f4a63;
`;

const PreviewRow = styled.div`
  display: flex;
  align-items: center;
  justify-content: space-between;
  height: 38px;
  margin-bottom: 17px;
  padding-right: 5px;
  label,
  a {
    display: flex;
    align-items: center;
    gap: 5px;
  }
  a {
    gap: 2px;
    color: #4a7fe8;
    text-decoration: none;
  }
  input {
    display: grid;
    place-items: center;
    width: 13px;
    height: 13px;
    border: 1px solid #2a2a2a;
    background: #fff;
    appearance: none;
  }
  input:checked::after {
    content: "";
    width: 8px;
    height: 4px;
    margin-bottom: 2px;
    border: solid #2a2a2a;
    border-width: 0 0 1px 1px;
    transform: rotate(-45deg);
  }
`;

/* status bar */
const Status = styled.footer`
  display: flex;
  flex: none;
  align-items: center;
  height: 29px;
  padding-bottom: 1px;
`;

const StatusText = styled.span`
  padding: 0 7px 0 10px;
`;

const StatusButton = styled.button`
  display: flex;
  align-items: center;
  gap: 1px;
  height: 24px;
  padding: 0 4px 0 1px;
  background: ${(p) => (p.$on ? "#e9f1fb" : "none")};
`;

const ViewTools = styled.div`
  display: flex;
  align-items: center;
  gap: 2px;
  margin-left: auto;
  padding-right: 14px;
`;

const ZoomText = styled.button`
  display: flex;
  align-items: center;
  gap: 5px;
  padding: 0 5px;
  color: #3f4a63;
`;

const ZoomSlider = styled.input`
  width: 147px;
  height: 20px;
  margin: 0 2px 0 4px;
  background: linear-gradient(90deg, #2b3448 43%, #cfd3da 43%) center / 100% 1px no-repeat;
  appearance: none;
  &::-webkit-slider-thumb {
    width: 12px;
    height: 12px;
    border: 1px solid #2b3448;
    border-radius: 50%;
    background: #f5f7f9;
    appearance: none;
  }
`;

/* floating tools */
const Ime = styled.div`
  position: absolute;
  right: 0;
  bottom: 156px;
  z-index: 2;
  display: flex;
  align-items: center;
  gap: 9px;
  width: 140px;
  height: 26px;
  border: 1px solid #b5cfea;
  border-right: 0;
  background: #fff;
  color: #0a6fd6;
  font-size: 15px;
  > svg {
    flex: none;
  }
  > svg:first-child {
    margin: 0 -4px 2px -16px;
  }
`;

const Speed = styled.div`
  position: absolute;
  right: 6px;
  bottom: 82px;
  z-index: 2;
  display: flex;
  align-items: center;
  color: #fff;
`;

const SpeedPill = styled.div`
  width: 80px;
  height: 42px;
  margin-right: -20px;
  padding: 0 24px 0 11px;
  border-radius: 21px;
  background: #343a45;
  box-shadow: 0 1px 4px rgba(0, 0, 0, 0.4);
`;

const SpeedLine = styled.div`
  display: flex;
  align-items: center;
  height: 21px;
  padding-bottom: 1px;
  font-weight: 500;
  & + & {
    border-top: 1px solid #272c35;
  }
  svg {
    margin-right: auto;
  }
  small {
    color: #a9aeb8;
    font-size: 10px;
    font-weight: 400;
  }
`;

const Ball = styled.div`
  position: relative;
  width: 60px;
  height: 60px;
  border-radius: 50%;
  background: radial-gradient(#5a6072, #4b5163);
  box-shadow: 0 1px 4px rgba(0, 0, 0, 0.5);
  p {
    position: absolute;
    inset: 0;
    margin: 0;
    font-family: Lato, sans-serif;
    font-size: 24px;
    font-weight: 300;
    line-height: 58px;
    text-align: center;
  }
  small {
    font-size: 11px;
  }
`;

const Mark = styled.div`
  position: absolute;
  right: 9px;
  bottom: 8px;
  z-index: 2;
  display: flex;
  align-items: center;
  gap: 3px;
  opacity: 0.85;
  pointer-events: none;
  strong,
  em {
    display: block;
    color: #4b93d6;
    font-size: 21px;
    line-height: 24px;
  }
  em {
    color: #55c074;
    font-family: "Liberation Sans", sans-serif;
    font-size: 16px;
    font-style: normal;
    font-weight: 700;
    line-height: 20px;
  }
`;

export default App;
